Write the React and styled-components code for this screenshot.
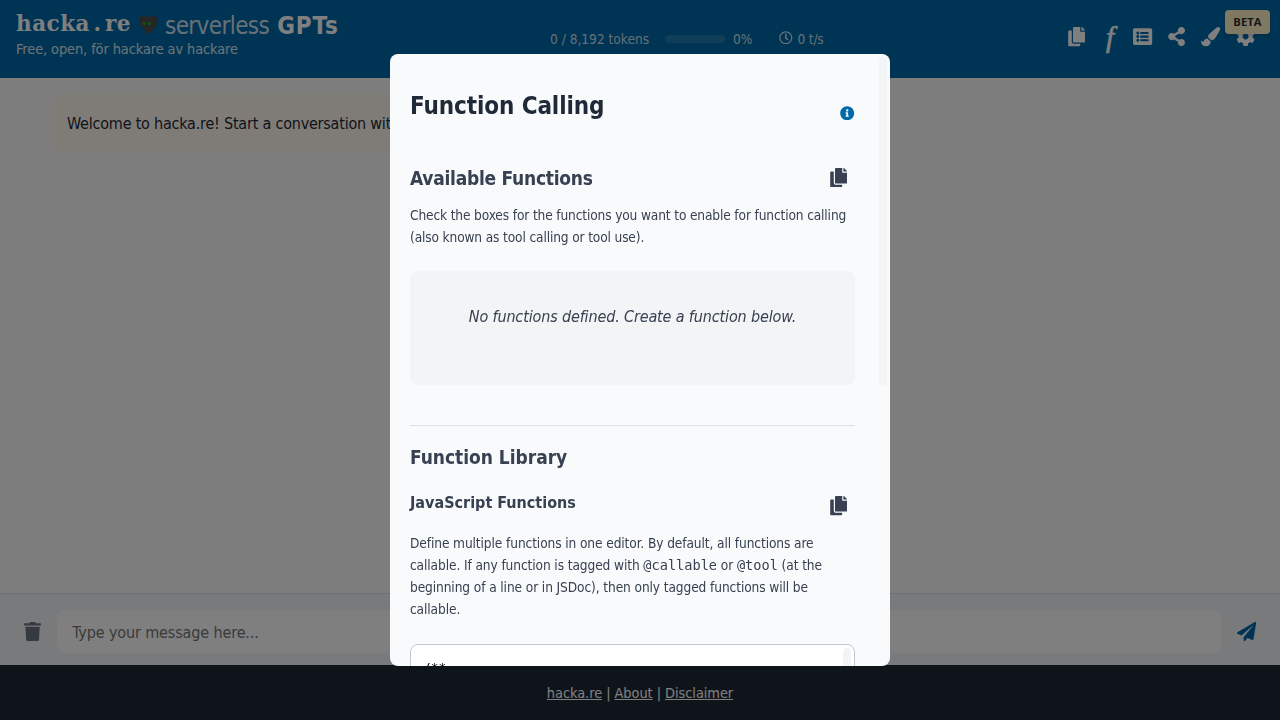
import React from "react";
import styled, { createGlobalStyle } from "styled-components";
import {
  FaCopy,
  FaListAlt,
  FaShareAlt,
  FaPaintBrush,
  FaCog,
  FaRegClock,
  FaInfoCircle,
  FaTrash,
  FaPaperPlane,
} from "react-icons/fa";

const sans = `"DejaVu Sans Condensed", "DejaVu Sans", sans-serif`;
const mono = `"DejaVu Sans Mono", monospace`;

const GlobalStyle = createGlobalStyle`
  * { box-sizing: border-box; }
  body {
    margin: 0;
    overflow: hidden;
    font-family: ${sans};
    font-stretch: condensed;
    font-size: 16px;
    letter-spacing: -0.008em;
    color: #1f2937;
  }
  h1, h2, h3, h4, p { margin: 0; }
`;

const Page = styled.div`
  display: flex;
  flex-direction: column;
  height: 720px;
  background: #f9fbf9;
`;

const Header = styled.header`
  display: grid;
  grid-template-columns: 534px 1fr auto;
  height: 78px;
  padding: 0 16px;
  background: #0069a8;
  color: #fff;
`;

const Brand = styled.div`
  padding-top: 10px;
`;

const Title = styled.h1`
  display: flex;
  align-items: baseline;
  height: 30px;
  line-height: 32px;
  font-size: 24px;
  font-weight: 400;
  white-space: nowrap;
`;

const Logo = styled.span`
  width: 115px;
  margin-right: 8px;
  align-self: flex-start;
  font-family: "DejaVu Serif", serif;
  font-stretch: normal;
  font-size: 21.5px;
  font-weight: 700;
  letter-spacing: 0.5px;
  line-height: 28px;
`;

const Dot = styled.span`
  margin: 0 3.5px;
`;

const Heart = styled.svg`
  width: 19px;
  height: 20px;
  margin: 5px 7px 0 0;
  align-self: flex-start;
`;

const Light = styled.span`
  margin-right: 8px;
  letter-spacing: -0.6px;
  opacity: 0.8;
`;

const Strong = styled.span`
  font-weight: 700;
  letter-spacing: 0.9px;
`;

const Tagline = styled.div`
  font-size: 14.4px;
  line-height: 18px;
  letter-spacing: -0.08px;
  white-space: nowrap;
  opacity: 0.85;
`;

const Stats = styled.div`
  display: flex;
  align-items: center;
  height: 78px;
  font-size: 13.6px;
  letter-spacing: 0;
  white-space: nowrap;
  color: rgba(255, 255, 255, 0.8);
`;

const Tokens = styled.span`
  width: 115px;
`;

const Meter = styled.span`
  width: 60px;
  height: 8px;
  margin-right: 8px;
  border-radius: 4px;
  background: rgba(255, 255, 255, 0.13);
`;

const Percent = styled.span`
  width: 46px;
`;

const Speed = styled.span`
  display: flex;
  align-items: center;
  gap: 5px;
  letter-spacing: -0.2px;

  svg { margin-top: -3px; }
`;

const Toolbar = styled.nav`
  display: flex;
  align-items: center;
  height: 74px;
`;

const ToolButton = styled.span`
  display: flex;
  align-items: center;
  justify-content: center;
  width: ${(p) => p.$width || 34}px;
  font-size: 19.2px;
`;

const FunctionGlyph = styled.span`
  font-family: "Liberation Serif", serif;
  font-style: italic;
  font-size: 29px;
  line-height: 30px;
  -webkit-text-stroke: 0.6px currentColor;
`;

const Beta = styled.div`
  position: absolute;
  top: 10px;
  left: 1225px;
  width: 45px;
  height: 24px;
  border-radius: 4px;
  background: #fef3c7;
  color: #2f2f2f;
  font: 700 11.2px/24px "Open Sans", sans-serif;
  letter-spacing: 0.1px;
  text-align: center;
  box-shadow: 0 2px 4px rgba(0, 0, 0, 0.15);
`;

const Chat = styled.main`
  flex: 1;
  padding: 16px 51px;
`;

const Welcome = styled.div`
  width: 420px;
  height: 58px;
  padding: 0 16px;
  border-radius: 8px;
  background: #fff9f0;
  line-height: 60px;
  letter-spacing: -0.21px;
  white-space: nowrap;
`;

const Composer = styled.div`
  display: flex;
  align-items: center;
  height: 72px;
  padding: 4px 24px 0 23px;
  border-top: 1px solid #dfe2e6;
  background: #f3f4f6;
`;

const MessageInput = styled.div`
  flex: 1;
  height: 43px;
  margin: 0 15px;
  padding: 0 15px;
  border-radius: 8px;
  background: #fff;
  color: #757575;
  line-height: 45px;
`;

const ComposerIcon = styled.span`
  display: flex;
  font-size: ${(p) => p.$size}px;
  color: ${(p) => p.$color};
`;

const Footer = styled.footer`
  height: 55px;
  background: #1f2937;
  color: #fff;
  font-size: 14.4px;
  line-height: 57px;
  letter-spacing: -0.04px;
  text-align: center;

  a { color: inherit; text-decoration: underline; }
`;

const Overlay = styled.div`
  position: fixed;
  inset: 0;
  display: flex;
  align-items: center;
  justify-content: center;
  background: rgba(0, 0, 0, 0.5);
`;

const Modal = styled.section`
  display: flex;
  width: 500px;
  height: 612px;
  padding: 0 3px 0 20px;
  overflow: hidden;
  border-radius: 8px;
  background: #f9fafc;
  color: #374151;
`;

const ModalBody = styled.div`
  width: 445px;
  margin-right: 24px;
  padding-top: 36px;
`;

const Thumb = styled.div`
  flex: none;
  width: 8px;
  height: ${(p) => p.$height}px;
  margin-top: ${(p) => p.$top}px;
  border-radius: 4px;
  background: #f3f4f6;
`;

const ModalHeader = styled.div`
  display: flex;
  justify-content: space-between;
  height: 73px;

  svg {
    margin: 15.5px 0.4px 0 0;
    color: #0069a8;
  }
`;

const ModalTitle = styled.h2`
  font-size: 24px;
  line-height: 32px;
  letter-spacing: -0.1px;
  color: #1f2937;
`;

const SectionHead = styled.div`
  display: flex;
  justify-content: space-between;
  height: ${(p) => p.$height}px;
  padding-right: 6.8px;

  svg { margin-top: ${(p) => p.$iconTop}px; }
`;

const SectionTitle = styled.h3`
  font-size: 19px;
  line-height: 30px;
  letter-spacing: ${(p) => p.$spacing || -0.25}px;
`;

const SubTitle = styled.h4`
  padding-top: 18.5px;
  font-size: 16px;
  line-height: 24px;
  letter-spacing: 0;
`;

const HelpText = styled.p`
  font-size: 13.6px;
  line-height: 21.7px;
  letter-spacing: ${(p) => p.$spacing || -0.135}px;
  white-space: nowrap;

  code {
    font-family: ${mono};
    font-stretch: normal;
    font-size: 13.6px;
    letter-spacing: 0;
  }
`;

const EmptyList = styled.div`
  height: 114px;
  margin: 23px 0 40px;
  padding-top: 34px;
  border-radius: 8px;
  background: #f3f4f6;
  font-style: italic;
  line-height: 24px;
  letter-spacing: -0.14px;
  text-align: center;
`;

const Library = styled.div`
  padding-top: 16px;
  border-top: 1px solid #dde0e4;
`;

const Editor = styled.div`
  display: flex;
  justify-content: space-between;
  height: 200px;
  margin-top: 24px;
  padding: 0 3px 0 12px;
  border: 1px solid #c4c7cc;
  border-radius: 8px;
  background: #fff;
`;

const Code = styled.pre`
  margin: 13px 0 0;
  font: 12.8px/20px ${mono};
  letter-spacing: 0;
  color: #000;
`;

export default function App() {
  return (
    <>
      <GlobalStyle />
      <Page>
        <Header>
          <Brand>
            <Title>
              <Logo>
                hacka<Dot>.</Dot>re
              </Logo>
              <Heart viewBox="0 0 19 20">
                <path
                  d="M9.5 20C8 17 0 12 0 5.500C0 2.500 2 .5 4.800 .5C7 .5 8.600 1.500 9.500 3C10.400 1.500 12 .5 14.200 .5C17 .5 19 2.500 19 5.500C19 12 11 17 9.500 20Z"
                  fill="#4c4c4c"
                />
                <circle cx="5" cy="8.500" r="1.600" fill="#10b810" />
                <circle cx="10" cy="8.700" r="1.600" fill="#10b810" />
                <circle cx="15" cy="9" r="1.200" fill="#285c2c" />
              </Heart>
              <Light>serverless</Light>
              <Strong>GPTs</Strong>
            </Title>
            <Tagline>Free, open, för hackare av hackare</Tagline>
          </Brand>
          <Stats>
            <Tokens>0 / 8,192 tokens</Tokens>
            <Meter />
            <Percent>0%</Percent>
            <Speed>
              <FaRegClock />0 t/s
            </Speed>
          </Stats>
          <Toolbar>
            <ToolButton><FaCopy /></ToolButton>
            <ToolButton $width={32}><FunctionGlyph>f</FunctionGlyph></ToolButton>
            <ToolButton><FaListAlt /></ToolButton>
            <ToolButton><FaShareAlt /></ToolButton>
            <ToolButton><FaPaintBrush /></ToolButton>
            <ToolButton $width={36}><FaCog /></ToolButton>
          </Toolbar>
        </Header>
        <Chat>
          <Welcome>Welcome to hacka.re! Start a conversation with</Welcome>
        </Chat>
        <Composer>
          <ComposerIcon $size={19.2} $color="#6b7280"><FaTrash /></ComposerIcon>
          <MessageInput>Type your message here...</MessageInput>
          <ComposerIcon $size={19.2} $color="#0069a8"><FaPaperPlane /></ComposerIcon>
        </Composer>
        <Footer>
          <a>hacka.re</a> | <a>About</a> | <a>Disclaimer</a>
        </Footer>
        <Beta>BETA</Beta>
      </Page>
      <Overlay>
        <Modal>
          <ModalBody>
            <ModalHeader>
              <ModalTitle>Function Calling</ModalTitle>
              <FaInfoCircle size={14.4} />
            </ModalHeader>
            <SectionHead $height={42} $iconTop={5}>
              <SectionTitle>Available Functions</SectionTitle>
              <FaCopy size={19.2} />
            </SectionHead>
            <HelpText>
              Check the boxes for the functions you want to enable for function calling
              <br />
              (also known as tool calling or tool use).
            </HelpText>
            <EmptyList>No functions defined. Create a function below.</EmptyList>
            <Library>
              <SectionTitle $spacing={-0.03}>Function Library</SectionTitle>
              <SectionHead $height={61} $iconTop={24}>
                <SubTitle>JavaScript Functions</SubTitle>
                <FaCopy size={19.2} />
              </SectionHead>
              <HelpText $spacing={-0.1}>
                Define multiple functions in one editor. By default, all functions are
                <br />
                callable. If any function is tagged with <code>@callable</code> or <code>@tool</code> (at the
                <br />
                beginning of a line or in JSDoc), then only tagged functions will be
                <br />
                callable.
              </HelpText>
              <Editor>
                <Code>/**</Code>
                <Thumb $height={100} $top={3} />
              </Editor>
            </Library>
          </ModalBody>
          <Thumb $height={330} $top={2} />
        </Modal>
      </Overlay>
    </>
  );
}
